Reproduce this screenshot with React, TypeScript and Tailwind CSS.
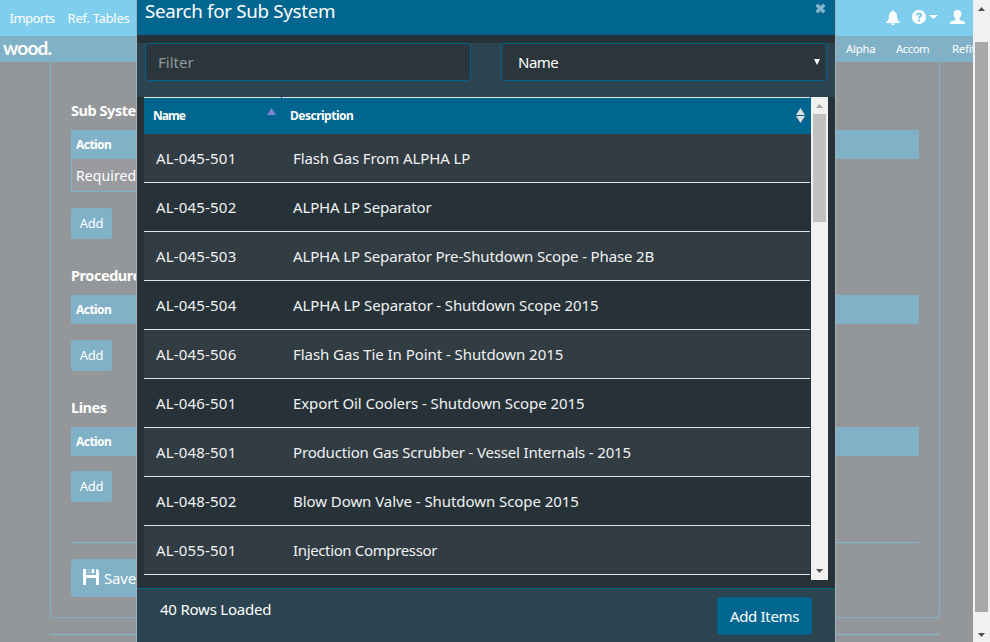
import React from "react";

const rows: [string, string, string][] = [
  ["AL-045-501", "Flash Gas From ALPHA LP", "tracking-[-0.1px]"],
  ["AL-045-502", "ALPHA LP Separator", "tracking-[-0.15px]"],
  ["AL-045-503", "ALPHA LP Separator Pre-Shutdown Scope - Phase 2B", "tracking-[-0.145px]"],
  ["AL-045-504", "ALPHA LP Separator - Shutdown Scope 2015", "tracking-[-0.1px]"],
  ["AL-045-506", "Flash Gas Tie In Point - Shutdown 2015", "tracking-[-0.06px]"],
  ["AL-046-501", "Export Oil Coolers - Shutdown Scope 2015", "tracking-[-0.09px]"],
  ["AL-048-501", "Production Gas Scrubber - Vessel Internals - 2015", "tracking-[-0.17px]"],
  ["AL-048-502", "Blow Down Valve - Shutdown Scope 2015", "tracking-[-0.06px]"],
  ["AL-055-501", "Injection Compressor", "tracking-[-0.36px]"],
];

function BellIcon() {
  return (
    <svg className="h-[15px] w-[14px]" viewBox="0 0 14 15" fill="white">
      <path d="M6 1.5C6 .2 8 .2 8 1.5 10.2 2 11 4 11 6.2 11 9 12 10.6 13.6 12v.9H.4V12C2 10.6 3 9 3 6.2 3 4 3.8 2 6 1.5Z" />
      <path d="M4.8 13.4h4.4C8.8 14.5 8 15 7 15s-1.8-.5-2.2-1.6Z" />
    </svg>
  );
}

function HelpIcon() {
  return (
    <svg className="h-[14px] w-[14px]" viewBox="0 0 14 14">
      <circle cx="7" cy="7" r="7" fill="white" />
      <path d="M3.8 5.500C3.800 3.500 5 2.500 7.100 2.500s3.100 1 3.100 2.700c0 1.900-2.200 1.900-2.200 3.400H5.900c0-2.200 2-2.300 2-3.300 0-.5-.3-.8-.8-.8-.6 0-.9.4-.9 1ZM5.900 9.400H8v2H5.900Z" fill="#7fceee" />
    </svg>
  );
}

function UserIcon() {
  return (
    <svg className="h-[14px] w-[15px]" viewBox="0 0 15 14" fill="white">
      <path d="M7.500 0c2.500 0 3.900 1.500 3.900 3.800 0 1.900-.8 3.600-1.900 4.400v1.100c0 .5.200.7.7.9l3.700 1.400c.7.3 1 .8 1 1.500v.9H.1v-.9c0-.7.3-1.200 1-1.500l3.700-1.400c.5-.2.700-.4.700-.9V8.200C4.400 7.400 3.600 5.700 3.600 3.800 3.600 1.500 5 0 7.500 0Z" />
    </svg>
  );
}

function SaveIcon() {
  return (
    <svg className="h-4 w-4" viewBox="0 0 16 16" fill="white">
      <path d="M0 0h3v6h10V0h1l2 2v14h-3V9H3v7H0Z" />
      <path d="M4 0h5v5H4ZM10 0h2v5h-2Z" fillOpacity=".2" />
      <path d="M9 0h2v4H9Z" />
    </svg>
  );
}

function CloseIcon() {
  return (
    <svg className="h-[11px] w-[11px]" viewBox="0 0 11 11">
      <path d="M1.700 1.700 9.300 9.300M9.300 1.700 1.700 9.300" stroke="#80b2c8" strokeWidth="3.6" />
    </svg>
  );
}

function Slash() {
  return (
    <svg className="h-[10px] w-[5px] shrink-0" viewBox="0 0 5 10">
      <path d="M.5 9.500 4.300.5" stroke="#a4b0b6" fill="none" />
    </svg>
  );
}

function Arrow({ up, color }: { up?: boolean; color: string }) {
  return (
    <svg className="h-1 w-[7px]" viewBox="0 0 7 4" fill={color}>
      <path d={up ? "M0 4 3.500 0 7 4Z" : "M0 0H7L3.500 4Z"} />
    </svg>
  );
}

function AddButton() {
  return (
    <button className="flex h-[31px] w-[41px] items-center justify-center rounded-[3px] bg-[#80b1c7] text-[13px] tracking-[-0.2px]">
      Add
    </button>
  );
}

function ActionHead() {
  return (
    <div className="flex h-[29px] items-center bg-[#80b1c7] pl-[5px] text-xs font-bold tracking-[-0.55px]">Action</div>
  );
}

function SectionTitle({ children }: { children: React.ReactNode }) {
  return <h3 className="h-6 text-[14.500px] leading-[18px] font-bold tracking-[-0.45px] whitespace-nowrap">{children}</h3>;
}

function Page() {
  return (
    <div className="flex h-full w-[973px] flex-col overflow-hidden">
      <div className="flex h-9 shrink-0 items-center justify-between bg-[#7fceee]">
        <nav className="flex gap-[13px] pt-px pl-[9.500px] text-[13px]">
          <span className="tracking-[-0.52px]">Imports</span>
          <span className="tracking-[-0.28px]">Ref. Tables</span>
        </nav>
        <div className="flex items-center pr-2 pb-0.5">
          <BellIcon />
          <div className="ml-3 flex items-center gap-[3px]">
            <HelpIcon />
            <svg className="h-1 w-[9px]" viewBox="0 0 9 4" fill="white"><path d="M0 0h9L4.500 4Z" /></svg>
          </div>
          <div className="ml-3"><UserIcon /></div>
        </div>
      </div>
      <div className="flex h-[26px] shrink-0 items-center justify-between bg-[#80b1c7]">
        <span className="pb-[3px] pl-[3px] font-[Lato] text-[19px] leading-5 font-bold tracking-[-0.8px]">wood.</span>
        <div className="flex w-[138px] items-center overflow-hidden text-[11.300px] whitespace-nowrap">
          <Slash />
          <span className="ml-[6px] w-[38px] shrink-0 tracking-[-0.2px]">Alpha</span>
          <Slash />
          <span className="ml-[7px] w-[42px] shrink-0 tracking-[-0.45px]">Accom</span>
          <Slash />
          <span className="ml-[9px] shrink-0 tracking-[-0.2px]">Refit</span>
        </div>
      </div>
      <main className="ml-[50px] h-[556px] w-[890px] shrink-0 rounded-b-[4px] border border-t-0 border-[#7fb2c9] px-5 pt-[39px]">
        <SectionTitle>Sub System</SectionTitle>
        <div className="mt-[5px]"><ActionHead /></div>
        <div className="mb-4 flex h-[33px] w-60 items-center border border-t-0 border-[#80b1c7] bg-[#999b9e] pl-1 text-[14px] tracking-[0.08px]">Required</div>
        <AddButton />
        <div className="pt-[27px]"><SectionTitle>Procedure</SectionTitle></div>
        <div className="mt-[5px] mb-4"><ActionHead /></div>
        <AddButton />
        <div className="pt-[27px]"><SectionTitle>Lines</SectionTitle></div>
        <div className="mt-[5px] mb-[15px]"><ActionHead /></div>
        <AddButton />
        <hr className="mt-10 mb-4 border-[#7fb9d2]" />
        <button className="flex h-[38px] w-24 items-center gap-[5px] rounded bg-[#80b1c7] pl-[12px] text-[15px] tracking-[-0.2px]">
          <span className="pb-[3px]"><SaveIcon /></span>
          <span>Save</span>
        </button>
      </main>
      <hr className="mt-4 ml-[50px] w-[890px] shrink-0 border-[#7fb9d2]" />
    </div>
  );
}

function PageScrollbar() {
  return (
    <div className="flex w-[17px] flex-col items-center justify-between bg-[#f1f1f1] pt-[7px] pb-[5px]">
      <Arrow up color="#505050" />
      <div className="mt-[31px] mb-auto h-[570px] w-[13px] bg-[#a8a8a8]" />
      <Arrow color="#505050" />
    </div>
  );
}

function Dialog() {
  return (
    <div className="absolute top-0 left-[136px] flex h-[642px] w-[700px] flex-col border-x border-[#a5b0b8] bg-[#263238]">
      <header className="flex h-[35px] shrink-0 justify-between bg-[#006690] pr-[9px] pl-2">
        <h2 className="pt-px text-[18.750px] leading-5 tracking-[-0.31px]">Search for Sub System</h2>
        <div className="pt-[3px]"><CloseIcon /></div>
      </header>
      <div className="mt-2 flex h-[54px] shrink-0 gap-[30px] bg-[#2c4450] pl-2 text-[15px]">
        <div className="flex h-[38px] w-[326px] items-center rounded border border-[#00648e] bg-[#2b363c] pl-3 text-[#929799]">Filter</div>
        <div className="flex h-[38px] w-[326px] items-center justify-between rounded border border-[#00648e] bg-[#2b363c] pr-[6px] pl-4">
          <span className="tracking-[-0.5px]">Name</span>
          <svg className="h-[6px] w-[6px]" viewBox="0 0 6 6" fill="white"><path d="M0 0h6L3 6Z" /></svg>
        </div>
      </div>
      <div className="ml-[7px] flex h-[483px] w-[684px] shrink-0">
        <div className="w-[667px] pr-px">
          <div className="flex h-[37px] gap-px text-xs font-bold">
            <div className="flex w-[137px] items-center justify-between border-t border-[#dfe4e8] bg-[#006690] pr-[5px] pl-[9px] tracking-[-1px] shadow-[1px_0_0_#006690]">
              <span>Name</span>
              <svg className="mb-[9px] h-[7px] w-[9px]" viewBox="0 0 9 7" fill="#7b83d8"><path d="M0 7 4.500 0 9 7Z" /></svg>
            </div>
            <div className="flex flex-1 items-center justify-between border-t border-[#dfe4e8] bg-[#006690] pr-[5px] pl-2 tracking-[-0.5px] shadow-[1px_0_0_#006690]">
              <span>Description</span>
              <svg className="mb-[2px] h-[15px] w-[9px]" viewBox="0 0 9 15" fill="#dddddd"><path d="M0 7 4.500 0 9 7ZM0 8h9l-4.500 7Z" /></svg>
            </div>
          </div>
          {rows.map(([name, description, tracking], i) => (
            <div key={name} className={`flex h-[49px] items-center border-b border-[#dfe4e8] pl-3 text-[15px] text-[#f1f2f3] ${i % 2 ? "bg-[#263238]" : "bg-[#323c43]"}`}>
              <span className="w-[137px] tracking-[0.18px]">{name}</span>
              <span className={tracking}>{description}</span>
            </div>
          ))}
        </div>
        <div className="flex w-[17px] flex-col items-center bg-[#f1f1f1] pt-[7px] pb-[7px]">
          <Arrow up color="#a3a3a3" />
          <div className="mt-[6px] mb-auto h-[108px] w-[13px] bg-[#c1c1c1]" />
          <Arrow color="#505050" />
        </div>
      </div>
      <footer className="mt-2 flex flex-1 items-start justify-between border-t border-[#006690] bg-[#2c4450] pr-[23px] pl-[23px] text-[15px]">
        <span className="pt-[9px] tracking-[-0.22px]">40 Rows Loaded</span>
        <button className="mt-2 h-[38px] w-[95px] rounded bg-[#006690] tracking-[-0.32px]">Add Items</button>
      </footer>
    </div>
  );
}

export default function App() {
  return (
    <div className="relative flex h-[642px] w-[990px] overflow-hidden bg-[#93979a] font-['Noto_Sans',sans-serif] text-white">
      <Page />
      <PageScrollbar />
      <Dialog />
    </div>
  );
}
